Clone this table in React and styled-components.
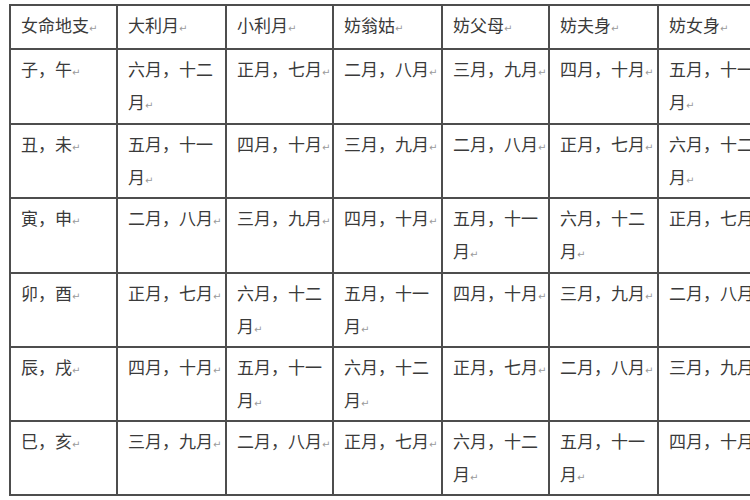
import styled, { createGlobalStyle } from 'styled-components';

const GlobalStyle = createGlobalStyle`
    html, body {
        margin: 0;
        padding: 0;
        background: #ffffff;
        overflow: hidden;
    }
    body {
        width: 750px;
        height: 500px;
        font-family: "Noto Sans CJK SC", "Liberation Sans", sans-serif;
    }
`

const Page = styled.div`
    padding: 4px 0 0 9px;
`

const Table = styled.table`
    border-collapse: collapse;
    table-layout: fixed;
    width: 755px;
    color: #3a3a3a;
    font-size: 17px;
    line-height: 33px;
`

const Row = styled.tr`
    height: ${props => props.$h}px;
`

const Cell = styled.td`
    border: 2px solid #4d4d4d;
    padding: 2px 8px 0 10px;
    vertical-align: top;
    word-break: break-all;
`

const Mark = styled.span`
    display: inline-block;
    width: 0;
    overflow: visible;
    white-space: nowrap;
    font-family: "DejaVu Sans", sans-serif;
    font-size: 10px;
    color: #9a9a9a;
    vertical-align: baseline;
`

const widths = [107, 109, 107, 109, 107, 109, 107]

const header = ['女命地支', '大利月', '小利月', '妨翁姑', '妨父母', '妨夫身', '妨女身']

const rows = [
    ['子，午', '六月，十二月', '正月，七月', '二月，八月', '三月，九月', '四月，十月', '五月，十一月'],
    ['丑，未', '五月，十一月', '四月，十月', '三月，九月', '二月，八月', '正月，七月', '六月，十二月'],
    ['寅，申', '二月，八月', '三月，九月', '四月，十月', '五月，十一月', '六月，十二月', '正月，七月'],
    ['卯，酉', '正月，七月', '六月，十二月', '五月，十一月', '四月，十月', '三月，九月', '二月，八月'],
    ['辰，戌', '四月，十月', '五月，十一月', '六月，十二月', '正月，七月', '二月，八月', '三月，九月'],
    ['巳，亥', '三月，九月', '二月，八月', '正月，七月', '六月，十二月', '五月，十一月', '四月，十月'],
]

const heights = [75, 73, 75, 72, 74, 74]

function Text({ children }) {
    return <>{children}<Mark>↵</Mark></>
}

export default function App() {
    return (
        <>
            <GlobalStyle />
            <Page>
                <Table>
                    <colgroup>
                        {widths.map((w, i) => <col key={i} style={{ width: w }} />)}
                    </colgroup>
                    <tbody>
                        <Row $h={44}>
                            {header.map((h, i) => <Cell key={i}><Text>{h}</Text></Cell>)}
                        </Row>
                        {rows.map((r, i) => (
                            <Row key={i} $h={heights[i]}>
                                {r.map((c, j) => <Cell key={j}><Text>{c}</Text></Cell>)}
                            </Row>
                        ))}
                    </tbody>
                </Table>
            </Page>
        </>
    );
}
